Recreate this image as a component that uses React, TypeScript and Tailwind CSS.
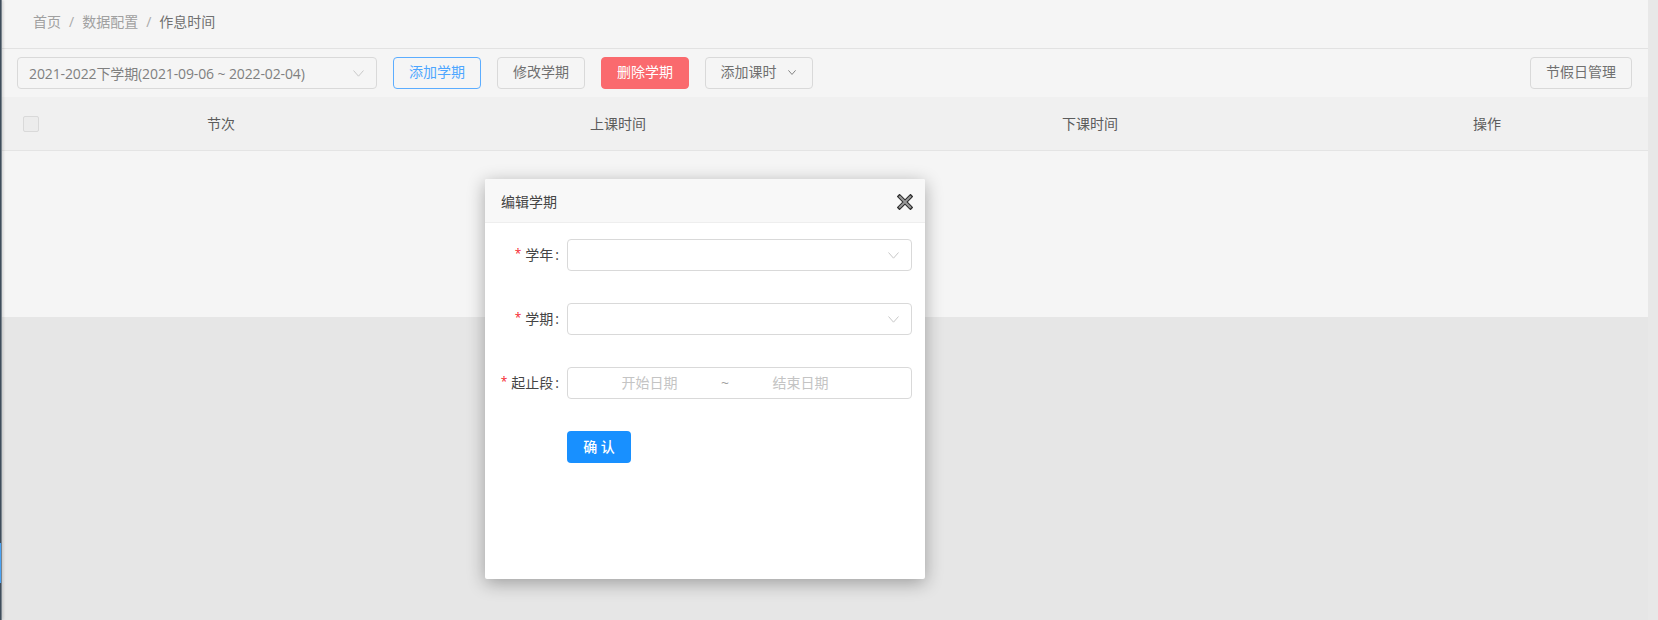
import React from "react";

const FONT = "font-['Open_Sans','Noto_Sans_CJK_SC',sans-serif]";

function Chevron({ className = "" }: { className?: string }) {
  return (
    <svg viewBox="0 0 11 7" className={className} fill="none" stroke="currentColor" strokeWidth="1">
      <path d="M0.5 0.5 L5.5 6.2 L10.5 0.5" />
    </svg>
  );
}

function CloseIcon() {
  return (
    <svg viewBox="0 0 16 16" className="w-[16px] h-[16px]" fill="none">
      <path d="M2.5 2.5 L13.5 13.5 M13.5 2.5 L2.5 13.5" stroke="#2e2e2e" strokeWidth="4" strokeLinecap="square" />
      <path d="M2.8 2.8 L13.2 13.2 M13.2 2.8 L2.8 13.2" stroke="#9a9a9a" strokeWidth="2" strokeLinecap="square" />
    </svg>
  );
}

function ToolButton({ children, className = "" }: { children: React.ReactNode; className?: string }) {
  return (
    <button className={`h-[32px] rounded-[4px] border text-[14px] leading-none flex items-center justify-center shrink-0 pb-[2px] ${className}`}>
      {children}
    </button>
  );
}

function FormRow({ label, children }: { label: string; children: React.ReactNode }) {
  return (
    <div className="flex items-center h-[32px]">
      <div className="w-[74px] pb-[2px] flex items-center justify-end text-[14px] text-[#444] shrink-0">
        <span className="text-[#f5222d] text-[12px] mr-[4px] leading-none">*</span>
        <span>{label}</span>
        <span className="ml-[2px]">:</span>
      </div>
      <div className="ml-[8px] w-[345px] h-[32px] rounded-[4px] border border-[#d9d9d9] bg-white flex items-center">
        {children}
      </div>
    </div>
  );
}

function SelectBody() {
  return (
    <div className="flex-1 flex justify-end pr-[12px]">
      <Chevron className="w-[11px] h-[7px] text-[#c8c8c8]" />
    </div>
  );
}

export default function App() {
  return (
    <div className={`${FONT} relative w-[1658px] h-[620px] overflow-hidden bg-[#e6e6e6] flex`}>
      <div className="relative z-10 w-[2px] h-full shrink-0 flex flex-col bg-gradient-to-r from-[#243444] to-[#98a0a6] shadow-[1px_0_3px_rgba(0,0,0,0.2)]">
        <div className="h-[543px]" />
        <div className="h-[40px] w-[1px] bg-[#4aa3f5]" />
      </div>

      <main className="w-[1646px] h-[317px] shrink-0 bg-[#f5f5f5] flex flex-col">
        <nav className="h-[48px] pl-[31px] flex items-center text-[14px] text-[#a0a0a0] pb-[6px]">
          <span>首页</span>
          <span className="mx-[8px] text-[#aaa]">/</span>
          <span>数据配置</span>
          <span className="mx-[8px] text-[#aaa]">/</span>
          <span className="text-[#707070]">作息时间</span>
        </nav>
        <div className="h-[1px] bg-[#e2e2e2]" />

        <div className="h-[48px] flex items-start pt-[8px] pl-[15px] pr-[16px]">
          <div className="w-[360px] h-[32px] rounded-[4px] border border-[#d9d9d9] flex items-center justify-between pl-[11px] pr-[12px] shrink-0">
            <span className="text-[14px] text-[#808080] whitespace-nowrap tracking-[-0.12px]">2021-2022下学期(2021-09-06 ~ 2022-02-04)</span>
            <Chevron className="w-[11px] h-[7px] text-[#c8c8c8]" />
          </div>
          <ToolButton className="ml-[16px] w-[88px] border-[#5cadff] text-[#4da6ff]">添加学期</ToolButton>
          <ToolButton className="ml-[16px] w-[88px] border-[#d9d9d9] text-[#707070]">修改学期</ToolButton>
          <ToolButton className="ml-[16px] w-[88px] border-[#fa6a6e] bg-[#fa6a6e] text-white">删除学期</ToolButton>
          <ToolButton className="ml-[16px] w-[108px] border-[#d9d9d9] text-[#707070] pr-[2px]">
            添加课时
            <Chevron className="ml-[11px] w-[8px] h-[5px] text-[#555]" />
          </ToolButton>
          <ToolButton className="ml-auto w-[102px] border-[#d9d9d9] text-[#707070]">节假日管理</ToolButton>
        </div>

        <div className="h-[53px] bg-[#f0f0f0] grid grid-cols-[58px_322px_472px_472px_322px] items-center text-[14px] text-[#5c5c5c] text-center">
          <div className="pl-[21px]">
            <div className="w-[16px] h-[16px] rounded-[2px] border border-[#d9d9d9] bg-[#ececec]" />
          </div>
          <div>节次</div>
          <div>上课时间</div>
          <div>下课时间</div>
          <div>操作</div>
        </div>
        <div className="h-[1px] bg-[#e4e4e4]" />
      </main>

      <div className="w-[10px] h-full shrink-0 bg-[#e8e8e8]" />

      <div className="absolute left-[485px] top-[179px] w-[440px] h-[400px] bg-white rounded-[2px] shadow-[0_4px_18px_rgba(0,0,0,0.32)] flex flex-col">
        <div className="h-[44px] shrink-0 bg-[#f8f8f8] border-b border-[#eeeeee] rounded-t-[2px] flex items-center justify-between pl-[16px] pr-[12px]">
          <span className="text-[14px] text-[#444] translate-y-[1px]">编辑学期</span>
          <span className="translate-y-[1px]">
            <CloseIcon />
          </span>
        </div>
        <div className="flex flex-col gap-[32px] pt-[16px]">
          <FormRow label="学年">
            <SelectBody />
          </FormRow>
          <FormRow label="学期">
            <SelectBody />
          </FormRow>
          <FormRow label="起止段">
            <div className="flex items-center px-[11px] pb-[2px] text-[14px] text-[#c4c4c4] w-full">
              <span className="w-[141px] text-center">开始日期</span>
              <span className="w-[10px] text-center text-[#a0a0a0]">~</span>
              <span className="w-[141px] text-center">结束日期</span>
            </div>
          </FormRow>
          <div className="pl-[82px]">
            <button className="w-[64px] h-[32px] rounded-[4px] bg-[#1890ff] text-white text-[14px] font-medium pb-[2px] flex items-center justify-center">
              确 认
            </button>
          </div>
        </div>
      </div>
    </div>
  );
}
